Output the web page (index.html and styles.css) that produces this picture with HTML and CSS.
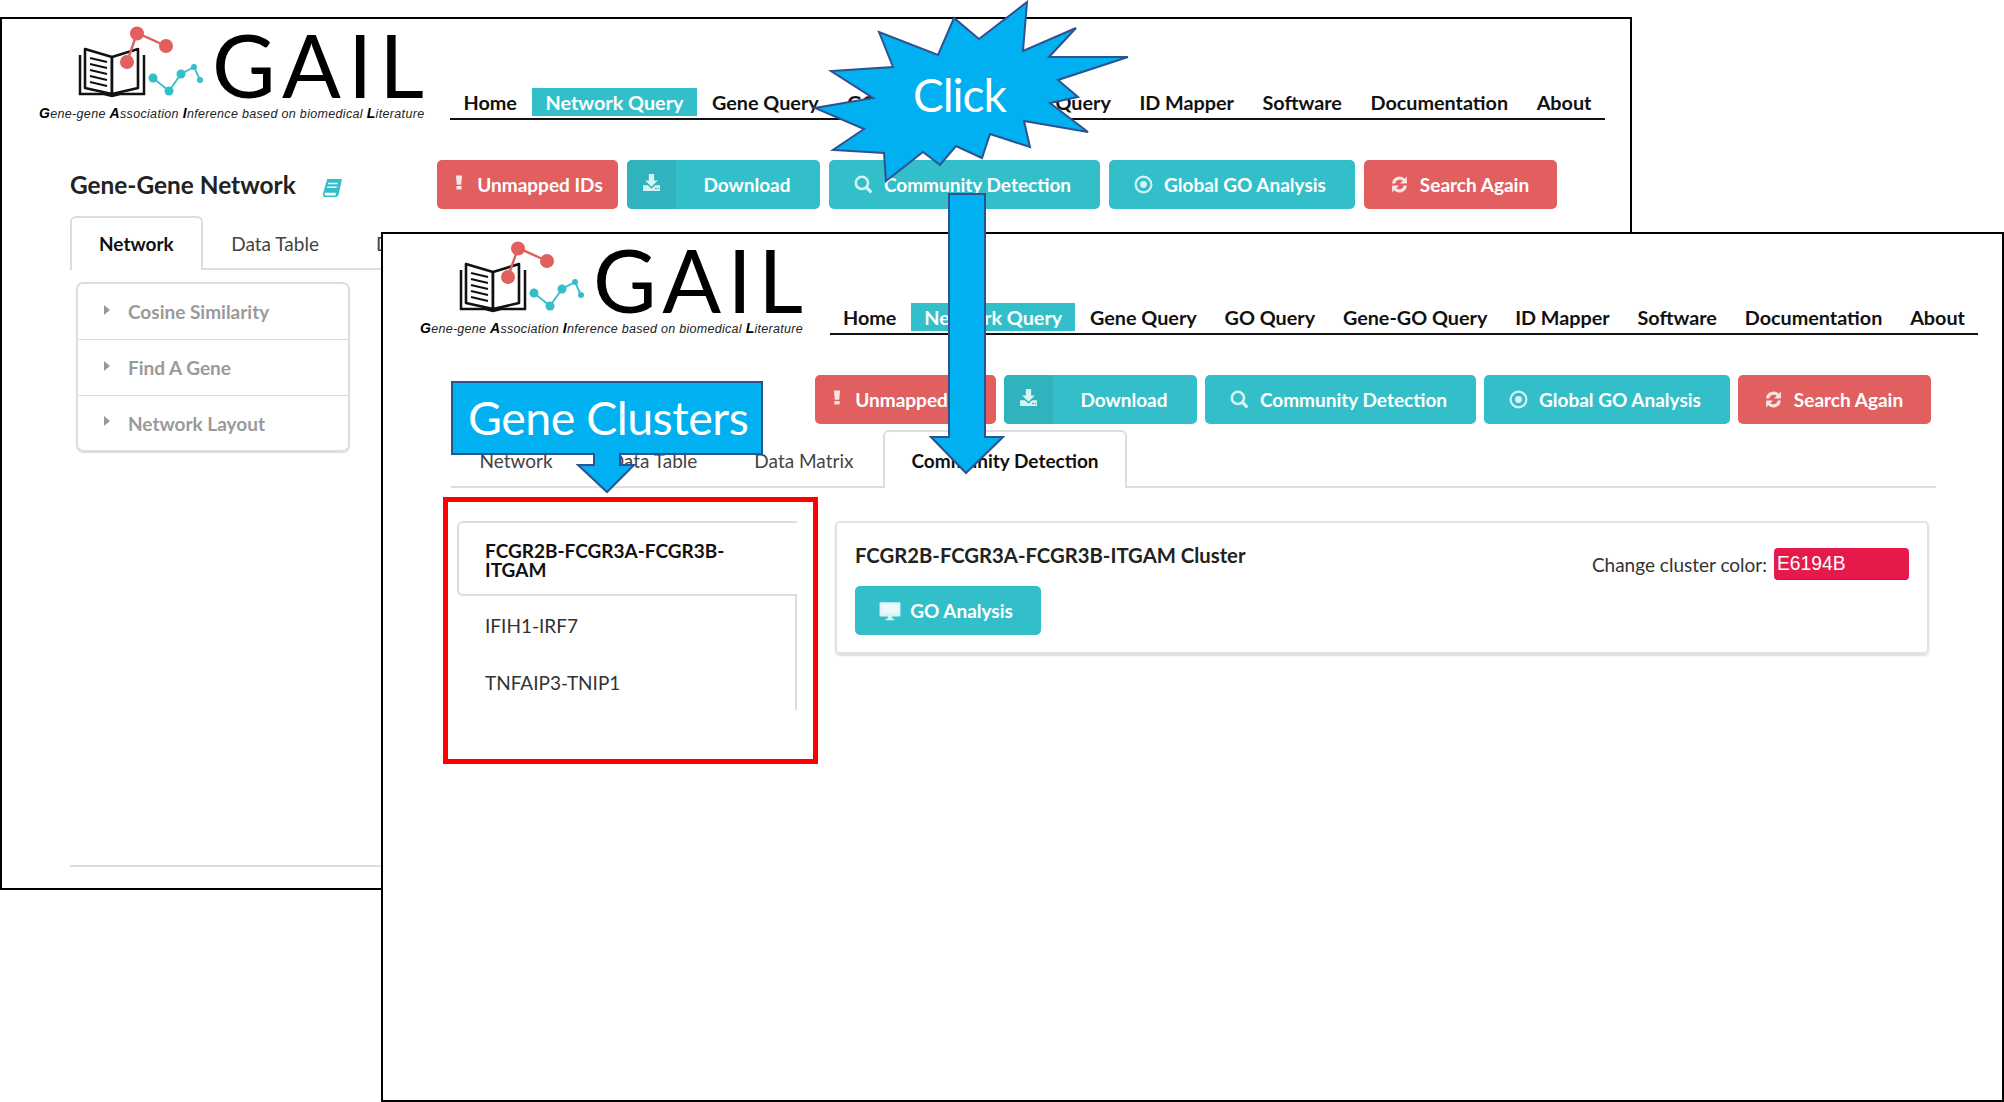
FILE: index.html
```html
<!DOCTYPE html>
<html lang="en">
<head>
<meta charset="utf-8">
<title>GAIL</title>
<link rel="stylesheet" href="styles.css">
</head>
<body>
<svg class="defs" width="0" height="0" aria-hidden="true">
  <symbol id="logo-mark" viewBox="0 -8 135 78">
    <path d="M2 25v39l24 0 8 2 8-2 24 0V25" fill="none" stroke="#111" stroke-width="2.5"/>
    <path d="M7 19l27 8v37L7 58z" fill="#fff" stroke="#111" stroke-width="2.6" stroke-linejoin="round"/>
    <path d="M34 27l26-8v39l-26 6z" fill="#fff" stroke="#111" stroke-width="2.6" stroke-linejoin="round"/>
    <path d="M12 28l17 4M12 34l17 4M12 40l17 4M12 46l17 4M12 52l17 4" stroke="#111" stroke-width="2.2"/>
    <path d="M49 32L59 3l29 13" fill="none" stroke="#e25f5f" stroke-width="2.4"/>
    <circle cx="59" cy="3.500" r="7" fill="#e25f5f"/><circle cx="88" cy="16" r="7" fill="#e25f5f"/><circle cx="49" cy="32" r="7" fill="#e25f5f"/>
    <path d="M75 48l16 13 12-17 13-7 6 13" fill="none" stroke="#33bfca" stroke-width="1.8"/>
    <circle cx="75" cy="48" r="4.500" fill="#33bfca"/><circle cx="91" cy="61" r="4.500" fill="#33bfca"/><circle cx="103" cy="44" r="4.500" fill="#33bfca"/><circle cx="116" cy="37" r="3" fill="#33bfca"/><circle cx="122" cy="50" r="3" fill="#33bfca"/>
  </symbol>
  <symbol id="i-bang" viewBox="0 0 16 16"><path d="M4.500 0h7l-1 10.500h-5zM5 12h6v4H5z" fill="currentColor"/></symbol>
  <symbol id="i-down" viewBox="0 0 18 18"><path d="M6.500 1h5v6h3.500L9 13 3 7h3.500zM1 11.500h4.500L9 15l3.500-3.500H17V17H1zM12.500 14v1.500H14V14zM15 14v1.500h1V14z" fill="currentColor" fill-rule="evenodd"/></symbol>
  <symbol id="i-search" viewBox="0 0 18 18"><circle cx="7.500" cy="7.500" r="5.800" fill="none" stroke="currentColor" stroke-width="2.400"/><path d="M11.500 11.500l5 5" stroke="currentColor" stroke-width="3"/></symbol>
  <symbol id="i-dot" viewBox="0 0 18 18"><circle cx="9" cy="9" r="7.500" fill="none" stroke="currentColor" stroke-width="2"/><circle cx="9" cy="9" r="3.200" fill="currentColor"/></symbol>
  <symbol id="i-sync" viewBox="0 0 18 18"><path d="M2 8a7 7 0 0 1 12-4.500L16 1.500V8H9.500l2.500-2.500A4.300 4.300 0 0 0 5 8zM16 10a7 7 0 0 1-12 4.500L2 16.500V10h6.500L6 12.500A4.300 4.300 0 0 0 13 10z" fill="currentColor"/></symbol>
  <symbol id="i-desk" viewBox="0 0 20 18"><path d="M1.500 1h17c.6 0 1 .4 1 1v11c0 .6-.4 1-1 1H12v2h2v1.500H6V16h2v-2H1.500c-.6 0-1-.4-1-1V2c0-.6.4-1 1-1z" fill="currentColor"/><path d="M2 2.500h16V11H2z" fill="#eafafb"/></symbol>
</svg>

<main class="desktop">
  <section class="window window-back">
    <header class="site-head">
      <div class="logo">
        <div class="logo-top"><svg class="logo-mark"><use href="#logo-mark"/></svg><span class="logo-word">GAIL</span></div>
        <p class="logo-tag"><b>G</b>ene-gene <b>A</b>ssociation <b>I</b>nference based on biomedical <b>L</b>iterature</p>
      </div>
      <nav class="nav">
        <a>Home</a><a class="current">Network Query</a><a>Gene Query</a><a>GO Query</a><a>Gene-GO Query</a><a>ID Mapper</a><a>Software</a><a>Documentation</a><a>About</a>
      </nav>
    </header>
    <div class="toolbar with-title">
      <h1 class="page-title">Gene-Gene Network <svg class="title-book" viewBox="0 0 18 17"><path d="M4 0h14l-3 14c-.2 1.600-1.400 3-3 3H2c-1.500 0-2.300-1.300-2-3zM5 3.500l-.4 1.500h9l.4-1.500zM4.200 7l-.4 1.500h9l.4-1.500zM2.500 13c-.8 0-1 .5-1 1s.3 1.500 1 1.500h9.700c-.4-.8-.4-1.700 0-2.500z" fill="#33bfca" fill-rule="evenodd"/></svg></h1>
      <div class="buttons">
        <a class="btn red w-unmapped"><svg class="ic ic-bang"><use href="#i-bang"/></svg>Unmapped IDs</a>
        <a class="btn teal split w-download"><span class="split-icon"><svg class="ic"><use href="#i-down"/></svg></span><span class="split-text">Download</span></a>
        <a class="btn teal w-community"><svg class="ic"><use href="#i-search"/></svg>Community Detection</a>
        <a class="btn teal w-global"><svg class="ic"><use href="#i-dot"/></svg>Global GO Analysis</a>
        <a class="btn red w-search"><svg class="ic"><use href="#i-sync"/></svg>Search Again</a>
      </div>
    </div>
    <div class="tabs tabs-back">
      <a class="tab active">Network</a><a class="tab">Data Table</a><a class="tab">Data Matrix</a><a class="tab">Community Detection</a>
    </div>
    <div class="accordion">
      <div class="acc-row"><i class="caret"></i>Cosine Similarity</div>
      <div class="acc-row acc-mid"><i class="caret"></i>Find A Gene</div>
      <div class="acc-row"><i class="caret"></i>Network Layout</div>
    </div>
    <hr class="foot-rule">
  </section>

  <section class="window window-front">
    <header class="site-head">
      <div class="logo">
        <div class="logo-top"><svg class="logo-mark"><use href="#logo-mark"/></svg><span class="logo-word">GAIL</span></div>
        <p class="logo-tag"><b>G</b>ene-gene <b>A</b>ssociation <b>I</b>nference based on biomedical <b>L</b>iterature</p>
      </div>
      <nav class="nav">
        <a>Home</a><a class="current">Network Query</a><a>Gene Query</a><a>GO Query</a><a>Gene-GO Query</a><a>ID Mapper</a><a>Software</a><a>Documentation</a><a>About</a>
      </nav>
    </header>
    <div class="toolbar">
      <div class="buttons">
        <a class="btn red w-unmapped"><svg class="ic ic-bang"><use href="#i-bang"/></svg>Unmapped IDs</a>
        <a class="btn teal split w-download"><span class="split-icon"><svg class="ic"><use href="#i-down"/></svg></span><span class="split-text">Download</span></a>
        <a class="btn teal w-community"><svg class="ic"><use href="#i-search"/></svg>Community Detection</a>
        <a class="btn teal w-global"><svg class="ic"><use href="#i-dot"/></svg>Global GO Analysis</a>
        <a class="btn red w-search"><svg class="ic"><use href="#i-sync"/></svg>Search Again</a>
      </div>
    </div>
    <div class="tabs tabs-front">
      <a class="tab">Network</a><a class="tab">Data Table</a><a class="tab">Data Matrix</a><a class="tab active">Community Detection</a>
    </div>
    <div class="cluster-view">
      <ul class="cluster-list">
        <li class="active">FCGR2B-FCGR3A-FCGR3B-ITGAM</li>
        <li>IFIH1-IRF7</li>
        <li>TNFAIP3-TNIP1</li>
      </ul>
      <div class="cluster-card">
        <div class="card-left">
          <h2 class="card-title">FCGR2B-FCGR3A-FCGR3B-ITGAM Cluster</h2>
          <a class="btn teal go-btn"><svg class="ic ic-desk"><use href="#i-desk"/></svg>GO Analysis</a>
        </div>
        <div class="color-field"><span>Change cluster color:</span><span class="color-input">E6194B</span></div>
      </div>
    </div>
  </section>

  <div class="highlight-box"></div>

  <div class="callout star">
    <svg viewBox="0 0 330 200" width="330" height="200"><polygon points="217,2 213,51 266,28 239,57 318,57 248,80 268,97 240,103 278,132 214,121 220,147 180,134 172,158 146,146 130,165 113,152 76,181 74,153 23,150 54,129 5,108 63,98 21,71 83,67 69,32 128,55 144,18 169,39" fill="#00b0f0" stroke="#2f528f" stroke-width="2"/></svg>
    <span class="callout-text click-text">Click</span>
  </div>

  <svg class="callout click-arrow" viewBox="0 0 76 282" width="76" height="282"><polygon points="20,1 56,1 56,244 74,244 37,280 2,244 20,244" fill="#00b0f0" stroke="#2f528f" stroke-width="2"/></svg>

  <div class="callout clusters">
    <svg viewBox="0 0 314 114" width="314" height="114"><polygon points="2,2 312,2 312,74 170,74 170,85 184,85 157,112 128,85 144,85 144,74 2,74" fill="#00b0f0" stroke="#2f528f" stroke-width="2"/></svg>
    <span class="callout-text clusters-text">Gene Clusters</span>
  </div>
</main>
</body>
</html>
```

FILE: styles.css
```css
* { box-sizing: border-box; }
html, body { margin: 0; padding: 0; background: #fff; }
body { font-family: Lato, "Liberation Sans", sans-serif; color: #222; width: 2004px; height: 1102px; overflow: hidden; }
.defs { position: absolute; }
.desktop { position: relative; width: 2004px; height: 1102px; overflow: hidden; }

.window { position: absolute; background: #fff; border: 2px solid #000; overflow: hidden; }
.window-back { left: 0; top: 17px; width: 1632px; height: 873px; }
.window-front { left: 381px; top: 232px; width: 1623px; height: 870px; }

.site-head { display: flex; align-items: flex-start; height: 116px; padding-left: 37px; }
.logo { width: 385px; flex: none; padding-top: 9px; }
.logo-top { display: flex; align-items: flex-start; height: 74px; padding-left: 39px; }
.logo-mark { width: 135px; height: 78px; flex: none; margin-top: -6.500px; }
.logo-word { font-family: Lato, sans-serif; font-weight: 400; font-size: 87px; line-height: 74px; letter-spacing: 7px; margin-left: -1px; color: #000; }
.window-front .logo-word { letter-spacing: 6.300px; }
.logo-tag { margin: 3px 0 0; font-family: "Liberation Sans", sans-serif; font-style: italic; font-size: 12.500px; line-height: 16px; white-space: nowrap; color: #222; letter-spacing: .33px; }
.window-front .logo-tag { letter-spacing: .29px; }
.logo-tag b { color: #000; font-size: 14px; }

.nav { display: flex; justify-content: space-between; width: 1155px; margin-left: 26px; margin-top: 69px; height: 32px; border-bottom: 2px solid #111; }
.window-front .nav { width: 1148px; margin-left: 25px; }
.nav a { height: 28px; line-height: 28px; padding: 0 13.500px; font-size: 19.800px; font-weight: 700; color: #111; white-space: nowrap; }
.window-front .nav a { padding: 0 13px; }
.nav a.current { background: #33bfca; color: #fff; }

.toolbar { display: flex; height: 49px; margin-top: 25px; padding-left: 432px; position: relative; }
.toolbar.with-title { padding-left: 68px; }
.page-title { width: 367px; flex: none; margin: 0; font-size: 24.400px; font-weight: 700; line-height: 49px; color: #222; white-space: nowrap; }
.title-book { width: 19px; height: 18px; margin-left: 21px; vertical-align: -3px; }
.buttons { display: flex; gap: 9px; }
.window-front .buttons { gap: 8px; }
.btn { display: flex; align-items: center; justify-content: center; height: 49px; border-radius: 5px; color: #fff; font-size: 19px; font-weight: 700; white-space: nowrap; }
.btn.red { background: #e25f5f; }
.btn.teal { background: #33bfca; }
.w-unmapped { width: 181px; }
.w-download { width: 193px; }
.w-community { width: 271px; padding-right: 4px; }
.w-global { width: 246px; padding-right: 4px; }
.w-search { width: 193px; padding-right: 2px; }
.ic { width: 19px; height: 19px; margin-right: 11px; color: #d8f3f5; flex: none; }
.btn.red .ic { color: #f9e4e4; }
.ic-bang { width: 14px; height: 15px; margin-top: -4px; }
.split { justify-content: flex-start; overflow: hidden; }
.split-icon { width: 49px; height: 100%; background: #30b3bd; display: flex; align-items: center; justify-content: center; }
.split-icon .ic { margin-right: 0; margin-top: -4px; }
.split-text { flex: 1; text-align: center; padding-right: 2px; }

.tabs { display: flex; align-items: stretch; border-bottom: 2px solid #ddd; white-space: nowrap; }
.tabs-back { height: 61px; margin: 0 0 0 68px; padding-top: 7px; }
.tabs-front { height: 64px; margin: 0 66px 0 68px; padding-top: 6px; }
.tab { display: flex; align-items: center; padding: 0 26.500px; font-size: 19px; color: #444; margin-bottom: -2px; border: 2px solid transparent; border-bottom: 0; border-radius: 6px 6px 0 0; }
.tabs-back .tab { padding-bottom: 2px; }
.tabs-back .tab.active { padding: 0 27px 2px; }
.tab.active { color: #111; font-weight: 700; background: #fff; border-color: #ddd; }
.tabs-front .tab.active { margin-left: 1px; }

.accordion { width: 274px; height: 170px; margin: 12px 0 0 74px; border: 2px solid #ddd; border-radius: 7px; box-shadow: 0 1px 1px #ddd; }
.acc-row { display: flex; align-items: center; height: 55px; padding-left: 26px; font-size: 19px; font-weight: 700; color: #9a9a9a; }
.acc-row.acc-mid { height: 56px; }
.acc-row + .acc-row { border-top: 1px solid #ddd; }
.caret { width: 0; height: 0; border-left: 6px solid #999; border-top: 5.500px solid transparent; border-bottom: 5.500px solid transparent; margin-right: 18px; margin-top: -4px; }
.foot-rule { margin: 413px 0 0 68px; border: 0; border-top: 2px solid #ddd; }

.cluster-view { display: flex; align-items: flex-start; margin: 33px 0 0 74px; gap: 38px; }
.cluster-list { list-style: none; margin: 0; padding: 0; width: 340px; height: 189px; flex: none; border-right: 2px solid #ddd; font-size: 19px; color: #333; }
.cluster-list li { padding: 0 28px; height: 57px; line-height: 57px; }
.cluster-list li.active { height: 75px; margin: 0 -2px 1px 0; padding: 18px 26px 0; line-height: 19px; font-weight: 700; color: #111; background: #fff; border: 2px solid #ddd; border-right: 0; border-radius: 6px 0 0 6px; }
.cluster-card { display: flex; justify-content: space-between; width: 1094px; height: 133px; border: 2px solid #e2e2e2; border-radius: 5px; box-shadow: 0 2px 2px #ddd; padding: 0 18px 0 18px; }
.card-left { display: flex; flex-direction: column; align-items: flex-start; }
.card-title { margin: 19px 0 0; font-size: 20.300px; font-weight: 700; line-height: 26px; color: #222; white-space: nowrap; }
.go-btn { width: 186px; margin-top: 18px; padding-right: 4px; }
.ic-desk { width: 22px; height: 20px; margin-right: 9px; }
.color-field { display: flex; align-items: center; gap: 7px; height: 32px; margin-top: 25px; font-size: 19px; color: #333; }
.color-input { width: 135px; height: 32px; line-height: 31px; padding-left: 3px; background: #e6194b; color: #fff; border-radius: 4px; font-family: "Liberation Sans", sans-serif; font-size: 19.300px; border-bottom: 1px solid #c4143f; }

.highlight-box { position: absolute; left: 443px; top: 497px; width: 375px; height: 267px; border: 5px solid #f00; }

.callout { position: absolute; }
.callout svg { display: block; }
.star { left: 810px; top: 0; width: 330px; height: 200px; }
.click-arrow { left: 929px; top: 193px; }
.clusters { left: 450px; top: 380px; width: 314px; height: 114px; }
.callout-text { position: absolute; color: #fff; white-space: nowrap; font-family: Lato, "Open Sans", sans-serif; font-weight: 400; }
.click-text { left: 103px; top: 66px; font-size: 46px; line-height: 58px; letter-spacing: -1px; }
.clusters-text { left: 18px; top: 9px; font-size: 46.500px; line-height: 56px; letter-spacing: -.5px; }
```
